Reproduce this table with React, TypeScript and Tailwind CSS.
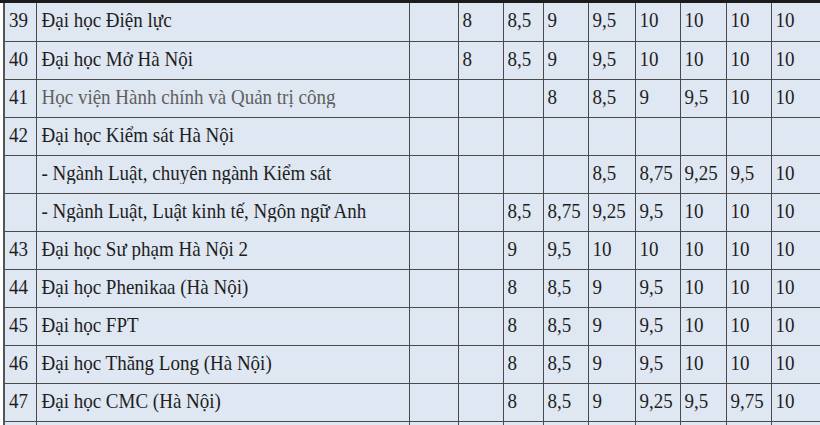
import React from "react";

type Row = { stt: string; name: string; gray?: boolean; vals: string[] };

const rows: Row[] = [
  { stt: "39", name: "Đại học Điện lực", vals: ["", "8", "8,5", "9", "9,5", "10", "10", "10", "10"] },
  { stt: "40", name: "Đại học Mở Hà Nội", vals: ["", "8", "8,5", "9", "9,5", "10", "10", "10", "10"] },
  { stt: "41", name: "Học viện Hành chính và Quản trị công", gray: true, vals: ["", "", "", "8", "8,5", "9", "9,5", "10", "10"] },
  { stt: "42", name: "Đại học Kiểm sát Hà Nội", vals: ["", "", "", "", "", "", "", "", ""] },
  { stt: "", name: "- Ngành Luật, chuyên ngành Kiểm sát", vals: ["", "", "", "", "8,5", "8,75", "9,25", "9,5", "10"] },
  { stt: "", name: "- Ngành Luật, Luật kinh tế, Ngôn ngữ Anh", vals: ["", "", "8,5", "8,75", "9,25", "9,5", "10", "10", "10"] },
  { stt: "43", name: "Đại học Sư phạm Hà Nội 2", vals: ["", "", "9", "9,5", "10", "10", "10", "10", "10"] },
  { stt: "44", name: "Đại học Phenikaa (Hà Nội)", vals: ["", "", "8", "8,5", "9", "9,5", "10", "10", "10"] },
  { stt: "45", name: "Đại học FPT", vals: ["", "", "8", "8,5", "9", "9,5", "10", "10", "10"] },
  { stt: "46", name: "Đại học Thăng Long (Hà Nội)", vals: ["", "", "8", "8,5", "9", "9,5", "10", "10", "10"] },
  { stt: "47", name: "Đại học CMC (Hà Nội)", vals: ["", "", "8", "8,5", "9", "9,25", "9,5", "9,75", "10"] },
  { stt: "", name: "", vals: ["", "", "", "", "", "", "", "", ""] },
];

const widths = [32, 373, 49, 45, 40, 45, 47, 45, 46, 45, 80];

function T({ children }: { children: React.ReactNode }) {
  return <span className="inline-block scale-y-110">{children}</span>;
}

export default function App() {
  return (
    <div className="w-[820px] h-[425px] overflow-hidden bg-white border-t-[3px] border-[#1b1b1b]">
      <div className="w-[900px] pl-[3px]">
        <table
          className="table-fixed border-collapse border-l-2 border-[#555] bg-[#dfe7f2] text-[#1e1e1e]"
          style={{ width: widths.reduce((a, b) => a + b, 0) }}
        >
          <colgroup>
            {widths.map((w, i) => (
              <col key={i} style={{ width: w }} />
            ))}
          </colgroup>
          <tbody>
            {rows.map((r, i) => (
              <tr key={i} className="h-[38px] border-b border-[#4a4a4a] [font-family:'Liberation_Serif',serif] text-[19px] leading-[22px]">
                <td className="align-top pt-[6px] pl-[4px] border-r border-[#4a4a4a] whitespace-nowrap overflow-hidden">
                  <T>{r.stt}</T>
                </td>
                <td className={"align-top pt-[6px] pl-[5px] border-r border-[#4a4a4a] whitespace-nowrap overflow-hidden " + (r.gray ? "text-[#5f5f5f]" : "")}>
                  <T>{r.name}</T>
                </td>
                {r.vals.map((v, j) => (
                  <td
                    key={j}
                    className={"align-top pt-[6px] pl-[4px] whitespace-nowrap overflow-hidden " + (j < r.vals.length - 1 ? "border-r border-[#4a4a4a]" : "")}
                  >
                    <T>{v}</T>
                  </td>
                ))}
              </tr>
            ))}
          </tbody>
        </table>
      </div>
    </div>
  );
}
